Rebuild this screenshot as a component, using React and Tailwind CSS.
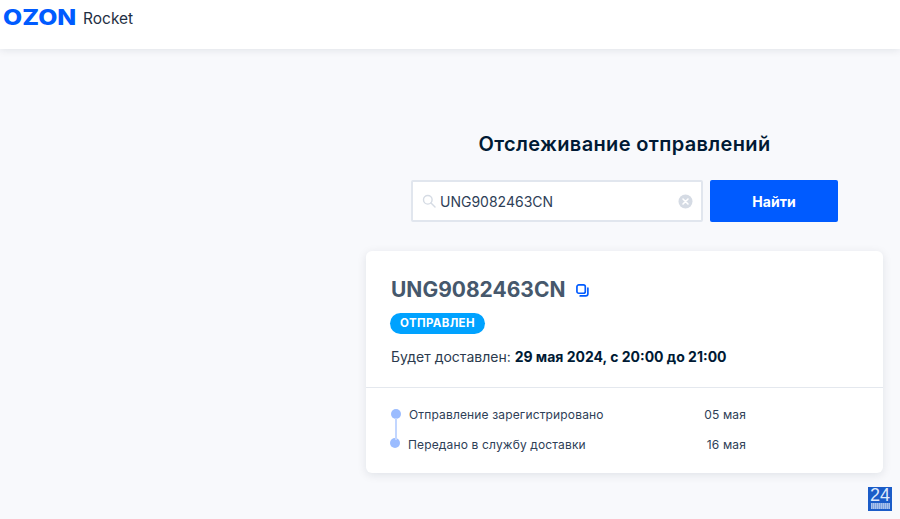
import React from "react";

const events = [
  { title: "Отправление зарегистрировано", date: "05 мая", rowClass: "", dotClass: "mb-[2px]" },
  { title: "Передано в службу доставки", date: "16 мая", rowClass: "-ml-[1px]", dotClass: "mb-[4px]" },
];

const App = () => {
  return (
    <div className="relative flex h-[519px] w-[900px] flex-col overflow-hidden bg-[#f8f9fc] font-['Inter',sans-serif] text-[#001a34]">
      <header className="flex h-[49px] shrink-0 items-start bg-white pl-[3px] pt-[6px] shadow-[0_1px_8px_rgba(0,26,52,0.1)]">
        <span className="w-[80px] origin-left scale-x-[1.18] text-[21px] leading-[24px] font-extrabold text-[#005bff]">
          OZON
        </span>
        <span className="mt-[1px] text-[15.5px] leading-[24px] font-normal text-[#1f2f43]">Rocket</span>
      </header>

      <main className="flex flex-col items-center pl-[366px] pr-[17px] pt-[80px]">
        <h1 className="text-[20px] leading-[30px] font-semibold tracking-[0.35px]">Отслеживание отправлений</h1>

        <div className="mt-[21px] flex gap-[7px]">
          <div className="flex h-[42px] w-[292px] items-center rounded-[2px] border-2 border-[#e1e6ee] bg-white pl-[9px] pr-[8px]">
            <svg width="14" height="14" viewBox="0 0 14 14" fill="none" stroke="#d5dbe4" strokeWidth="1.4">
              <circle cx="5.8" cy="5.8" r="4.3" />
              <path d="M9 9l4 4" strokeLinecap="round" />
            </svg>
            <span className="ml-[4px] mt-[1px] text-[14px] leading-[20px] text-[#2e4057]">UNG9082463CN</span>
            <svg className="ml-auto" width="15" height="15" viewBox="0 0 15 15">
              <circle cx="7.5" cy="7.5" r="7" fill="#d5dbe4" />
              <path d="M5 5l5 5M10 5l-5 5" stroke="#fff" strokeWidth="1.6" strokeLinecap="round" />
            </svg>
          </div>
          <button className="h-[42px] w-[128px] rounded-[2px] bg-[#005bff] text-[14px] font-bold text-white">Найти</button>
        </div>

        <section className="mt-[29px] w-[517px] rounded-[6px] bg-white shadow-[0_2px_10px_rgba(0,26,52,0.1)]">
          <div className="h-[137px] border-b border-[#e4e8ee] pl-[25px] pt-[24px]">
            <div className="flex items-center">
              <span className="text-[21px] leading-[30px] font-bold text-[#46586c]">UNG9082463CN</span>
              <svg className="ml-[11px]" width="13" height="13" viewBox="0 0 14 14" fill="none" stroke="#005bff" strokeWidth="1.8">
                <rect x="1" y="1" width="9" height="9" rx="2" />
                <path d="M12.8 4.5v6a2.3 2.3 0 0 1-2.3 2.3h-6" strokeLinecap="round" />
              </svg>
            </div>
            <div className="-ml-[1px] mt-[8px] flex h-[21px] w-[95px] items-center justify-center rounded-full bg-[#00a2ff] text-[11.5px] font-bold tracking-[0.35px] text-white">
              ОТПРАВЛЕН
            </div>
            <p className="mt-[11px] text-[14px] leading-[24px] text-[#2b3a4d]">
              Будет доставлен: <b className="font-bold text-[#001a34]">29 мая 2024, с 20:00 до 21:00</b>
            </p>
          </div>

          <div className="relative h-[85px] pl-[25px] pr-[137px] pt-[17px]">
            <span className="absolute left-[29px] top-[30px] h-[22px] w-[2px] bg-[#c2d6ff]" />
            {events.map((item) => (
              <div key={item.title} className={`${item.rowClass} mb-[10px] flex h-[20px] items-center text-[12px] tracking-[0.15px] text-[#2e4057]`}>
                <span className={`${item.dotClass} h-[10px] w-[10px] shrink-0 rounded-full bg-[#9bbcff]`} />
                <span className="ml-[8px] whitespace-nowrap">{item.title}</span>
                <span className="ml-auto whitespace-nowrap">{item.date}</span>
              </div>
            ))}
          </div>
        </section>
      </main>

      <div className="absolute bottom-[8px] right-[8px] flex h-[24px] w-[24px] flex-col items-center bg-[#1b5cc8]">
        <span className="text-[18px] leading-[16px] font-['Liberation_Sans',sans-serif] text-[#dfe9fb]">24</span>
        <span className="h-[6px] w-[19px] bg-[repeating-linear-gradient(90deg,#a9c2ec_0,#a9c2ec_1px,#7fa3e0_1px,#7fa3e0_2px)]" />
      </div>
    </div>
  );
};

export default App;
